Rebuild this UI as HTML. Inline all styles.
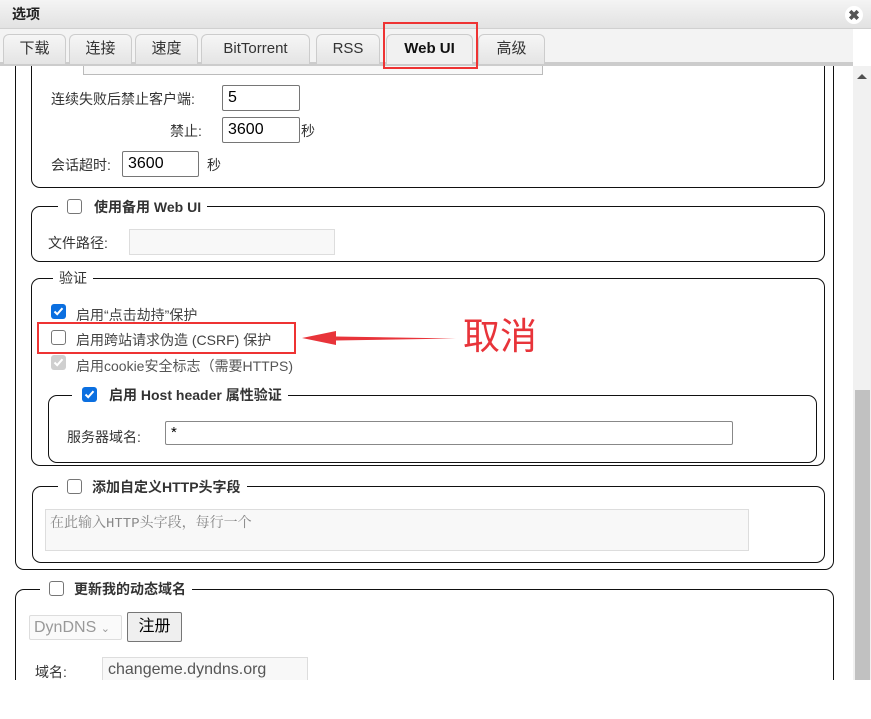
<!DOCTYPE html>
<html><head><meta charset="utf-8"><style>
*{box-sizing:border-box;margin:0;padding:0}
body{width:871px;height:680px;overflow:hidden;background:#fff;position:relative;font-family:"Liberation Sans","Noto Sans CJK SC",sans-serif;font-size:14px;color:#333}
.a{position:absolute}
.wrap{position:absolute;left:0;top:0;width:871px;height:680px;clip-path:inset(66px 0 0 0)}
.title{left:0;top:0;width:871px;height:29px;background:linear-gradient(#f4f4f4,#e2e2e2);border-bottom:1px solid #d0d0d0}
.tabbar{left:0;top:29px;width:853px;height:37px;background:#f3f3f3;border-bottom:4px solid #ccc}
.tab{top:34px;height:30px;background:linear-gradient(#f6f6f6,#e4e4e4);border:1px solid #ccc;border-bottom:none;border-radius:6px 6px 0 0;text-align:center;line-height:28px;font-size:15px;color:#333}
.box{border:1px solid #111;border-radius:9px}
.lg{background:#fff;padding:0 6px;line-height:18px}
.b{font-weight:bold}
.cb{width:15px;height:15px;border:1px solid #767676;border-radius:3px;background:#fff}
.cbc{width:15px;height:15px;border-radius:3px;background:#0b6fe0}
.cbg{width:15px;height:15px;border-radius:3px;background:#cfcfcf}
.cbc svg,.cbg svg{position:absolute;left:2px;top:2px}
.in{border:1px solid #767676;border-radius:2px;background:#fff;font-size:16px;color:#000;padding-left:5px;line-height:24px}
.dis{border:1px solid #ddd;background:#f8f8f8}
</style></head><body>
<div class="a title"></div>
<div class="a b" style="left:12px;top:4px;font-size:14px;color:#222">选项</div>
<div class="a" style="left:845px;top:6px;width:18px;height:18px;border-radius:9px;background:#fff;text-align:center;line-height:18px;font-size:14px;font-weight:bold;color:#555">✖</div>
<div class="a tabbar"></div>
<div class="a tab" style="left:3px;width:63px">下载</div>
<div class="a tab" style="left:69px;width:63px">连接</div>
<div class="a tab" style="left:135px;width:63px">速度</div>
<div class="a tab" style="left:201px;width:109px">BitTorrent</div>
<div class="a tab" style="left:316px;width:64px">RSS</div>
<div class="a tab b" style="left:386px;width:87px;background:#f1f1f1;color:#111">Web UI</div>
<div class="a tab" style="left:478px;width:67px">高级</div>
<div class="a" style="left:383px;top:22px;width:95px;height:47px;border:2px solid #e33;z-index:5"></div>

<!-- scrollbar -->
<div class="a" style="left:853px;top:66px;width:18px;height:614px;background:#f1f1f1"></div>
<div class="a" style="left:855px;top:390px;width:15px;height:290px;background:#c1c1c1"></div>
<div class="a" style="left:857px;top:74px;width:0;height:0;border-left:5px solid transparent;border-right:5px solid transparent;border-bottom:5px solid #505050"></div>

<div class="wrap">
<div class="a" style="left:15px;top:40px;width:819px;height:530px;border:1px solid #111;border-top:none;border-radius:0 0 9px 9px"></div>
<div class="a" style="left:31px;top:40px;width:794px;height:148px;border:1px solid #111;border-top:none;border-radius:0 0 9px 9px"></div>
<div class="a dis" style="left:83px;top:55px;width:460px;height:20px;border-color:#bbb"></div>

<div class="a" style="left:51px;top:89px">连续失败后禁止客户端:</div>
<div class="a in" style="left:222px;top:85px;width:78px;height:26px">5</div>
<div class="a" style="left:170px;top:121px">禁止:</div>
<div class="a in" style="left:222px;top:117px;width:78px;height:26px">3600</div>
<div class="a" style="left:301px;top:121px">秒</div>
<div class="a" style="left:51px;top:155px">会话超时:</div>
<div class="a in" style="left:122px;top:151px;width:77px;height:26px">3600</div>
<div class="a" style="left:207px;top:155px">秒</div>

<div class="a box" style="left:31px;top:206px;width:794px;height:56px"></div>
<div class="a lg b" style="left:58px;top:198px;padding-right:6px"><span style="display:inline-block;width:15px;height:15px;border:1px solid #767676;border-radius:3px;vertical-align:-2px;margin:0 12px 0 3px"></span>使用备用 Web UI</div>
<div class="a" style="left:48px;top:233px">文件路径:</div>
<div class="a dis" style="left:129px;top:229px;width:206px;height:26px"></div>

<div class="a box" style="left:31px;top:278px;width:794px;height:188px"></div>
<div class="a lg" style="left:53px;top:269px">验证</div>
<div class="a cbc" style="left:51px;top:304px"><svg width="11" height="11" viewBox="0 0 11 11"><path d="M1.5 5.5l2.7 2.7 5.3-6" stroke="#fff" stroke-width="2" fill="none"/></svg></div>
<div class="a" style="left:76px;top:305px;color:#444">启用“点击劫持”保护</div>
<div class="a cb" style="left:51px;top:330px"></div>
<div class="a" style="left:76px;top:330px;color:#444">启用跨站请求伪造 (CSRF) 保护</div>
<div class="a cbg" style="left:51px;top:355px"><svg width="11" height="11" viewBox="0 0 11 11"><path d="M1.5 5.5l2.7 2.7 5.3-6" stroke="#fff" stroke-width="2" fill="none"/></svg></div>
<div class="a" style="left:76px;top:356px;color:#555">启用cookie安全标志（需要HTTPS)</div>
<div class="a" style="left:37px;top:322px;width:259px;height:32px;border:2px solid #e33"></div>
<svg class="a" style="left:296px;top:326px" width="162" height="24"><path d="M160 12.5L40 10.5 40 5 6 12 40 19 40 14.5Z" fill="#e8343a"/></svg>
<div class="a" style="left:463px;top:313px;font-size:37px;color:#e8343a;line-height:48px">取消</div>

<div class="a box" style="left:48px;top:395px;width:769px;height:68px"></div>
<div class="a lg b" style="left:72px;top:386px"><span class="cbc" style="display:inline-block;position:relative;vertical-align:-2px;margin:0 12px 0 4px"><svg width="11" height="11" viewBox="0 0 11 11"><path d="M1.5 5.5l2.7 2.7 5.3-6" stroke="#fff" stroke-width="2" fill="none"/></svg></span>启用 Host header 属性验证</div>
<div class="a" style="left:67px;top:427px">服务器域名:</div>
<div class="a in" style="left:165px;top:421px;width:568px;height:24px;line-height:22px;font-size:15px;border-color:#888">*</div>

<div class="a box" style="left:32px;top:486px;width:793px;height:77px"></div>
<div class="a lg b" style="left:58px;top:478px"><span style="display:inline-block;width:15px;height:15px;border:1px solid #767676;border-radius:3px;vertical-align:-2px;margin:0 10px 0 3px"></span>添加自定义HTTP头字段</div>
<div class="a dis" style="left:45px;top:509px;width:704px;height:42px;color:#888;font-family:'Liberation Mono','Noto Serif CJK SC',monospace;font-size:14px;padding:2px 4px">在此输入HTTP头字段，每行一个</div>

<div class="a box" style="left:15px;top:589px;width:819px;height:130px"></div>
<div class="a lg b" style="left:40px;top:580px"><span style="display:inline-block;width:15px;height:15px;border:1px solid #767676;border-radius:3px;vertical-align:-2px;margin:0 10px 0 3px"></span>更新我的动态域名</div>
<div class="a" style="left:29px;top:615px;width:93px;height:25px;border:1px solid #ddd;border-radius:2px;color:#999;font-size:16px;line-height:23px;padding-left:4px;background:#fafafa">DynDNS <span style="font-size:11px">⌄</span></div>
<div class="a" style="left:127px;top:612px;width:55px;height:30px;border:1px solid #767676;border-radius:2px;background:#efefef;text-align:center;line-height:28px;font-size:16px;color:#000">注册</div>
<div class="a" style="left:35px;top:662px">域名:</div>
<div class="a dis" style="left:102px;top:657px;width:206px;height:26px;color:#555;font-size:16px;padding-left:5px;line-height:24px">changeme.dyndns.org</div>
</div>
</body></html>
